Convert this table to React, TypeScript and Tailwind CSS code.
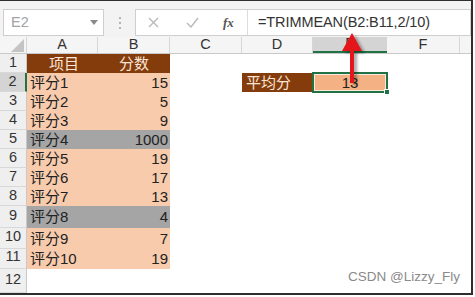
const colW = ["w-[27px]", "w-[71px]", "w-[72px]", "w-[72px]", "w-[71px]", "w-[74px]", "w-[73px]"];

type Row = { n: number; h: string; a?: string; b?: string; kind?: "head" | "peach" | "gray" };

const rows: Row[] = [
  { n: 1, h: "h-[19px]", a: "项目", b: "分数", kind: "head" },
  { n: 2, h: "h-[19px]", a: "评分1", b: "15", kind: "peach" },
  { n: 3, h: "h-[19px]", a: "评分2", b: "5", kind: "peach" },
  { n: 4, h: "h-[19px]", a: "评分3", b: "9", kind: "peach" },
  { n: 5, h: "h-[19px]", a: "评分4", b: "1000", kind: "gray" },
  { n: 6, h: "h-[19px]", a: "评分5", b: "19", kind: "peach" },
  { n: 7, h: "h-[19px]", a: "评分6", b: "17", kind: "peach" },
  { n: 8, h: "h-[19px]", a: "评分7", b: "13", kind: "peach" },
  { n: 9, h: "h-[22px]", a: "评分8", b: "4", kind: "gray" },
  { n: 10, h: "h-[21px]", a: "评分9", b: "7", kind: "peach" },
  { n: 11, h: "h-[20px]", a: "评分10", b: "19", kind: "peach" },
  { n: 12, h: "flex-1" },
];

const fill = {
  head: "bg-[#843c0c] text-[#fbe5d6]",
  peach: "bg-[#f8cbad] text-[#222]",
  gray: "bg-[#a5a5a5] text-[#222]",
};

function Toolbar() {
  return (
    <div className="h-[47px] bg-[#f3f3f3] flex items-start pt-[8px]">
      <div className="ml-[3px] w-[101px] h-[27px] bg-white border border-[#cfcfcf] flex items-center justify-between pl-[7px] pr-[5px]">
        <span className="text-[14.5px] text-[#a3a3a3]">E2</span>
        <svg width="8" height="5" viewBox="0 0 8 5">
          <polygon points="0,0 8,0 4,5" fill="#8a8a8a" />
        </svg>
      </div>
      <div className="w-[31px] h-[27px] flex flex-col items-center justify-center gap-[3px]">
        <span className="w-[2px] h-[2px] bg-[#b5b5b5]" />
        <span className="w-[2px] h-[2px] bg-[#b5b5b5]" />
        <span className="w-[2px] h-[2px] bg-[#b5b5b5]" />
      </div>
      <div className="w-[336px] h-[27px] bg-white border border-[#cfcfcf] flex items-center">
        <div className="w-[112px] h-full flex items-center border-r border-[#dcdcdc]">
          <svg className="ml-[12px]" width="11" height="11" viewBox="0 0 11 11">
            <path d="M1 1 L10 10 M10 1 L1 10" stroke="#b9b9b9" strokeWidth="1.4" />
          </svg>
          <svg className="ml-[27px]" width="13" height="11" viewBox="0 0 13 11">
            <path d="M1 6 L5 10 L12 1" stroke="#b9b9b9" strokeWidth="1.4" fill="none" />
          </svg>
          <span className="ml-[24px] italic font-bold text-[13px] text-[#555] font-['Liberation_Serif',serif]">
            fx
          </span>
        </div>
        <span className="ml-[10px] text-[14.5px] text-[#333] tracking-[-0.1px]">=TRIMMEAN(B2:B11,2/10)</span>
      </div>
    </div>
  );
}

function ColumnHeaders() {
  const letters = ["", "A", "B", "C", "D", "E", "F"];
  return (
    <div className="h-[17px] flex bg-[#f5f5f5] border-b border-[#c9c9c9]">
      {letters.map((l, i) => (
        <div
          key={i}
          className={`${colW[i]} h-full flex items-center justify-center text-[14.5px] text-[#333] ${
            i === 5 ? "bg-[#d4d4d4] border-b-2 border-[#217346]" : "border-r border-[#d6d6d6]"
          } ${i === 0 ? "relative" : ""}`}
        >
          {i === 0 ? (
            <svg className="absolute right-[2px] bottom-[1px]" width="13" height="13" viewBox="0 0 13 13">
              <polygon points="13,0 13,13 0,13" fill="#c4c4c4" />
            </svg>
          ) : (
            l
          )}
        </div>
      ))}
      <div className="flex-1" />
    </div>
  );
}

function SheetRow({ row }: { row: Row }) {
  const f = row.kind ? fill[row.kind] : "";
  const sel = row.n === 2;
  return (
    <div className={`${row.h} flex`}>
      <div
        className={`${colW[0]} h-full flex justify-center text-[14.5px] text-[#333] border-b border-[#d8d8d8] ${
          row.n >= 9 ? "items-end pb-[1px]" : "items-center"
        } ${sel ? "bg-[#d4d4d4] border-r-2 border-r-[#217346]" : "bg-[#efefef] border-r border-r-[#c9c9c9]"}`}
      >
        {row.n}
      </div>
      <div className={`${colW[1]} h-full flex items-center pl-[3px] text-[15px] ${f} ${row.kind === "head" ? "justify-center" : ""}`}>
        {row.a}
      </div>
      <div
        className={`${colW[2]} h-full flex items-center text-[15px] ${f} ${
          row.kind === "head" ? "justify-center" : "justify-end pr-[2px]"
        }`}
      >
        {row.b}
      </div>
      <div className={`${colW[3]} h-full`} />
      <div className={`${colW[4]} h-full flex items-center pl-[4px] text-[15px] ${sel ? "bg-[#843c0c] text-[#fbe5d6]" : ""}`}>
        {sel ? "平均分" : ""}
      </div>
      <div className={`${colW[5]} h-full relative flex items-center justify-center text-[15px] ${sel ? "bg-[#f4b183] text-[#222]" : ""}`}>
        {sel && (
          <>
            13
            <div className="absolute -inset-[1px] border-2 border-[#217346]">
              <div className="w-full h-full border border-white/70" />
            </div>
            <div className="absolute -right-[3px] -bottom-[3px] w-[6px] h-[6px] bg-[#217346] border border-white" />
          </>
        )}
      </div>
      <div className={`${colW[6]} h-full`} />
      <div className="flex-1" />
    </div>
  );
}

function Arrow() {
  return (
    <svg className="absolute left-[338px] top-[29px]" width="30" height="56" viewBox="0 0 30 56">
      <defs>
        <filter id="sh" x="-50%" y="-50%" width="200%" height="200%">
          <feDropShadow dx="3" dy="2" stdDeviation="1.5" floodColor="#000" floodOpacity="0.35" />
        </filter>
      </defs>
      <g filter="url(#sh)">
        <polygon points="14,3 4,21 12,21 12,53 16,53 16,21 24,21" fill="#e3141d" />
      </g>
    </svg>
  );
}

export default function App() {
  return (
    <div className="w-[475px] h-[297px] bg-white font-['Liberation_Sans','Noto_Sans_CJK_SC',sans-serif]">
      <div className="relative w-[473px] h-[295px] border-t border-r-2 border-b-2 border-[#2e2e2e] flex flex-col overflow-hidden">
        <Toolbar />
        <ColumnHeaders />
        <div className="flex-1 flex flex-col">
          {rows.map((r) => (
            <SheetRow key={r.n} row={r} />
          ))}
        </div>
        <Arrow />
        <span className="absolute right-[11px] bottom-[6px] text-[13.5px] text-[#8a8a8a]">CSDN @Lizzy_Fly</span>
      </div>
    </div>
  );
}
